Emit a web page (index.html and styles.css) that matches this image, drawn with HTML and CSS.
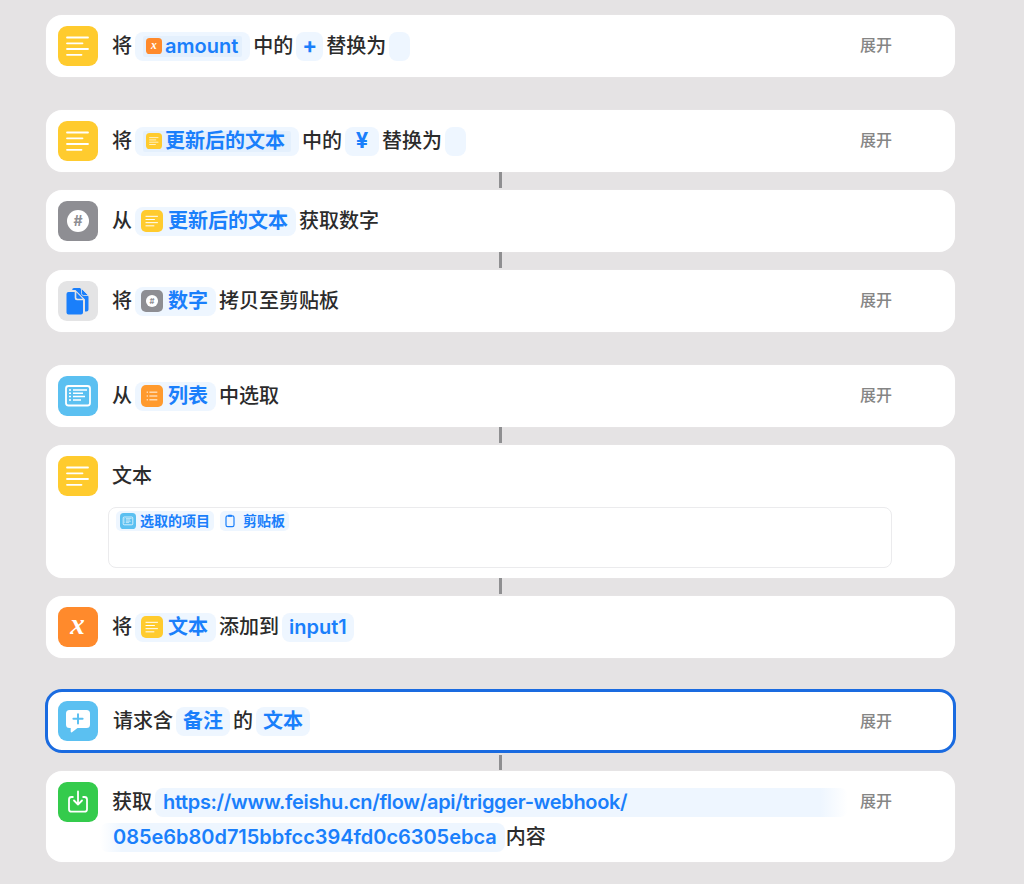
FILE: index.html
```html
<!DOCTYPE html>
<html lang="zh-CN">
<head>
<meta charset="utf-8">
<title>快捷指令</title>
<link rel="stylesheet" href="styles.css">
</head>
<body>
<svg class="sprite" xmlns="http://www.w3.org/2000/svg">
  <symbol id="i-text" viewBox="0 0 40 40">
    <rect width="40" height="40" rx="9" fill="#ffcb2e"/>
    <g stroke="#fff" stroke-width="1.8" stroke-linecap="round"><path d="M9 11.500h21M9 17.300h15.500M9 23h21M9 28.800h14.500"/></g>
  </symbol>
  <symbol id="i-var" viewBox="0 0 40 40">
    <rect width="40" height="40" rx="9" fill="#ff8a2c"/>
    <text x="19.500" y="27" text-anchor="middle" font-family="Liberation Serif, serif" font-size="29" font-style="italic" font-weight="700" fill="#fff">x</text>
  </symbol>
  <symbol id="i-num" viewBox="0 0 40 40">
    <rect width="40" height="40" rx="9" fill="#8e8e93"/>
    <circle cx="20" cy="20" r="11" fill="#fff"/>
    <text x="20" y="25" text-anchor="middle" font-family="Inter, sans-serif" font-size="14" font-weight="700" fill="#8e8e93">#</text>
  </symbol>
  <symbol id="i-copy" viewBox="0 0 40 40">
    <rect width="40" height="40" rx="9" fill="#e4e4e5"/>
    <path d="M16 7h6l8.500 8.500v13a2 2 0 0 1-2 2H27V18.500L17.500 9H14.200A2 2 0 0 1 16 7z" fill="#1a7ffb"/>
    <path d="M23.500 7.500l7 7h-5a2 2 0 0 1-2-2z" fill="#1a7ffb" stroke="#e4e4e5" stroke-width=".8"/>
    <path d="M10.500 11h6.200v6a2.200 2.200 0 0 0 2.200 2.200h6.100v12.300a2 2 0 0 1-2 2H10.500a2 2 0 0 1-2-2V13a2 2 0 0 1 2-2z" fill="#1a7ffb"/>
    <path d="M18.300 11.300l6.400 6.400h-5a1.400 1.400 0 0 1-1.400-1.400z" fill="#1a7ffb"/>
  </symbol>
  <symbol id="i-list" viewBox="0 0 40 40">
    <rect width="40" height="40" rx="9" fill="#ff9a2e"/>
    <g stroke="#fff" stroke-width="1.700" stroke-linecap="round"><path d="M11 13h1M16 13h13M11 20h1M16 20h13M11 27h1M16 27h13"/></g>
  </symbol>
  <symbol id="i-choose" viewBox="0 0 40 40">
    <rect width="40" height="40" rx="9" fill="#5bc0f1"/>
    <rect x="8" y="10" width="24" height="19.500" rx="2.500" fill="none" stroke="#fff" stroke-width="1.800"/>
    <g stroke="#fff" stroke-width="1.500"><path d="M11 14h2M15 14h14M11 17.300h2M15 17.300h10M11 20.600h2M15 20.600h12M11 24h2M15 24h8"/></g>
  </symbol>
  <symbol id="i-clip" viewBox="0 0 40 40">
    <rect x="10" y="7" width="20" height="27" rx="4" fill="none" stroke="#1a7ffb" stroke-width="3"/>
    <rect x="15" y="4.500" width="10" height="5" rx="1.500" fill="#1a7ffb"/>
  </symbol>
  <symbol id="i-ask" viewBox="0 0 40 40">
    <rect width="40" height="40" rx="9" fill="#5bc0f1"/>
    <path d="M11.500 9h17a3.500 3.500 0 0 1 3.500 3.500v11a3.500 3.500 0 0 1-3.500 3.500H19.500l-5.500 4.200a.8.8 0 0 1-1.300-.6V27H11.500A3.500 3.500 0 0 1 8 23.500v-11A3.500 3.500 0 0 1 11.500 9z" fill="#fff"/>
    <path d="M20 13.200v9.200M15.400 17.800h9.200" stroke="#5bc0f1" stroke-width="2" stroke-linecap="round"/>
  </symbol>
  <symbol id="i-get" viewBox="0 0 40 40">
    <rect width="40" height="40" rx="9" fill="#34cb4c"/>
    <path d="M15.500 15h-2a2.500 2.500 0 0 0-2.500 2.500v9.700a2.500 2.500 0 0 0 2.500 2.500h13a2.500 2.500 0 0 0 2.500-2.500v-9.700a2.500 2.500 0 0 0-2.500-2.500h-2" fill="none" stroke="#fff" stroke-width="1.800"/>
    <path d="M20 9.500v13M16 18.500l4 4 4-4" fill="none" stroke="#fff" stroke-width="1.800" stroke-linecap="round" stroke-linejoin="round"/>
  </symbol>
</svg>

<main class="flow">
  <section class="card">
    <svg class="icon"><use href="#i-text"/></svg>
    <div class="line">
      <span>将</span>
      <span class="pill pill-wrap"><span class="inner inner-var"><svg class="mini"><use href="#i-var"/></svg>amount</span></span>
      <span>中的</span>
      <span class="pill pill-sym">+</span>
      <span>替换为</span>
      <span class="pill pill-empty"></span>
    </div>
    <span class="expand">展开</span>
  </section>

  <div class="spacer"></div>

  <section class="card">
    <svg class="icon"><use href="#i-text"/></svg>
    <div class="line">
      <span>将</span>
      <span class="pill pill-wrap"><span class="inner"><svg class="mini"><use href="#i-text"/></svg>更新后的文本</span></span>
      <span>中的</span>
      <span class="pill pill-sym pill-yen">¥</span>
      <span>替换为</span>
      <span class="pill pill-empty"></span>
    </div>
    <span class="expand">展开</span>
  </section>
  <div class="link"></div>
  <section class="card">
    <svg class="icon"><use href="#i-num"/></svg>
    <div class="line">
      <span>从</span>
      <span class="pill"><svg class="glyph"><use href="#i-text"/></svg>更新后的文本</span>
      <span>获取数字</span>
    </div>
  </section>
  <div class="link"></div>
  <section class="card">
    <svg class="icon"><use href="#i-copy"/></svg>
    <div class="line">
      <span>将</span>
      <span class="pill"><svg class="glyph"><use href="#i-num"/></svg>数字</span>
      <span>拷贝至剪贴板</span>
    </div>
    <span class="expand">展开</span>
  </section>

  <div class="spacer"></div>

  <section class="card">
    <svg class="icon"><use href="#i-choose"/></svg>
    <div class="line">
      <span>从</span>
      <span class="pill"><svg class="glyph"><use href="#i-list"/></svg>列表</span>
      <span>中选取</span>
    </div>
    <span class="expand">展开</span>
  </section>
  <div class="link"></div>
  <section class="card card-text">
    <div class="card-head">
      <svg class="icon"><use href="#i-text"/></svg>
      <div class="line"><span>文本</span></div>
    </div>
    <div class="textbox">
      <span class="chip"><svg class="chip-icon"><use href="#i-choose"/></svg>选取的项目</span>
      <span class="chip chip-clip"><svg class="chip-icon chip-icon-clip"><use href="#i-clip"/></svg>剪贴板</span>
    </div>
  </section>
  <div class="link"></div>
  <section class="card">
    <svg class="icon"><use href="#i-var"/></svg>
    <div class="line">
      <span>将</span>
      <span class="pill"><svg class="glyph"><use href="#i-text"/></svg>文本</span>
      <span>添加到</span>
      <span class="pill pill-plain">input1</span>
    </div>
  </section>

  <div class="spacer spacer-selected"></div>

  <section class="card card-selected">
    <svg class="icon"><use href="#i-ask"/></svg>
    <div class="line">
      <span>请求含</span>
      <span class="pill pill-plain">备注</span>
      <span>的</span>
      <span class="pill pill-plain">文本</span>
    </div>
    <span class="expand">展开</span>
  </section>
  <div class="link link-selected"></div>
  <section class="card card-url">
    <div class="card-head">
      <svg class="icon"><use href="#i-get"/></svg>
      <div class="line">
        <span>获取</span>
        <span class="pill pill-url">https://www.feishu.cn/flow/api/trigger-webhook/</span>
      </div>
      <span class="expand">展开</span>
    </div>
    <div class="line line-second">
      <span class="pill pill-url2">085e6b80d715bbfcc394fd0c6305ebca</span>
      <span>内容</span>
    </div>
  </section>
</main>
</body>
</html>
```

FILE: styles.css
```css
* { box-sizing: border-box; }
html, body { margin: 0; height: 100%; }
body {
  background: #e5e3e4;
  font-family: "Inter", "Noto Sans CJK SC", sans-serif;
  font-size: 20px;
  font-weight: 500;
  color: #2b2b2b;
  overflow: hidden;
}
.sprite { display: none; }
.flow {
  display: flex;
  flex-direction: column;
  padding: 15px 69px 0 46px;
}
.card {
  display: flex;
  align-items: center;
  height: 62px;
  padding: 0 62px 0 12px;
  background: #fff;
  border-radius: 16px;
  box-shadow: 0 0 1px #eeedee;
}
.icon { width: 40px; height: 40px; flex: none; }
.line {
  display: flex;
  align-items: center;
  flex: 1;
  gap: 3px;
  margin-left: 14px;
  line-height: 29px;
  white-space: nowrap;
  min-width: 0;
}
.expand {
  flex: none;
  margin-right: 1px;
  padding-bottom: 2px;
  font-size: 16px;
  color: #858585;
  line-height: 20px;
}
.spacer { height: 33px; }
.spacer-selected { height: 31px; }
.link {
  flex: none;
  align-self: center;
  width: 3px;
  height: 16px;
  margin-bottom: 2px;
  background: #8f8f91;
}
.link-selected { margin-top: 2px; margin-bottom: 1px; height: 15px; }

.pill {
  display: inline-flex;
  align-items: center;
  height: 29px;
  padding: 0 8px 0 6px;
  border-radius: 8px;
  background: #eef6ff;
  color: #1a7ffb;
  font-weight: 600;
}
.pill-wrap { padding: 0 8px; }
.inner {
  display: inline-flex;
  align-items: center;
  height: 21px;
  padding-left: 3px;
  padding-right: 6px;
  background: #e4f0fd;
  border-radius: 2px;
}
.inner-var { padding-right: 4px; }
.mini { width: 16px; height: 16px; margin-right: 3px; flex: none; }
.glyph { width: 22px; height: 22px; margin-right: 5px; flex: none; }
.pill-sym { width: 27px; padding: 0 0 2px; justify-content: center; font-size: 22px; font-weight: 700; }
.pill-yen { width: 34px; }
.pill-empty { width: 21px; padding: 0; }
.pill-plain { padding: 0 7px; }

.card-text {
  display: block;
  height: 133px;
  padding: 11px 63px 10px 12px;
}
.card-head { display: flex; align-items: center; }
.textbox {
  display: flex;
  align-items: flex-start;
  gap: 6px;
  height: 61px;
  margin: 11px 0 0 50px;
  padding: 3px 7px;
  border: 1px solid #ebebed;
  border-radius: 8px;
}
.chip {
  display: inline-flex;
  align-items: center;
  height: 20px;
  padding: 0 4px 0 4px;
  border-radius: 5px;
  background: #eef6ff;
  color: #1a7ffb;
  font-size: 14px;
  font-weight: 600;
  line-height: 20px;
}
.chip-icon { width: 16px; height: 16px; margin-right: 4px; }
.chip-clip { padding-left: 2px; }
.chip-icon-clip { margin-right: 5px; }

.card-selected {
  height: 64px;
  margin: 0 -1px;
  padding: 0 60px 0 10px;
  border: 3px solid #1a6be0;
  border-radius: 17px;
  box-shadow: none;
}
.card-selected .line { margin-left: 15px; }
.card-selected .expand { padding-bottom: 0; }

.card-url {
  display: block;
  height: 91px;
  padding: 11px 62px 0 12px;
}
.pill-url {
  padding-left: 8px;
  flex: none;
  width: 693px;
  letter-spacing: -0.33px;
  background: linear-gradient(90deg, #eef6ff 96%, #fff 100%);
}
.line-second { gap: 1px; margin: 1px 0 0 42px; }
.pill-url2 {
  padding: 0 8px 0 13px;
  letter-spacing: -0.03px;
  background: linear-gradient(90deg, #fff 0, #eef6ff 22px);
}
```
